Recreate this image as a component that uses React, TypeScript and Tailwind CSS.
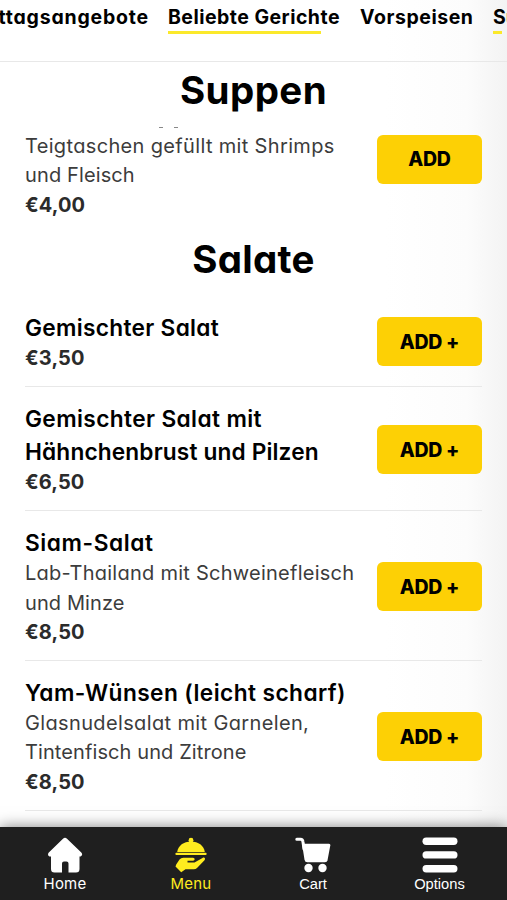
import React from 'react';

interface MenuItem {
  name: string[];
  nameClass: string[];
  description?: string[];
  descriptionClass?: string[];
  price: string;
}

const salads: MenuItem[] = [
  {
    name: ['Gemischter Salat'],
    nameClass: ['tracking-[0.3px]'],
    price: '€3,50',
  },
  {
    name: ['Gemischter Salat mit', 'Hähnchenbrust und Pilzen'],
    nameClass: ['tracking-[0.38px]', 'tracking-[0.14px]'],
    price: '€6,50',
  },
  {
    name: ['Siam-Salat'],
    nameClass: ['tracking-[0.57px]'],
    description: ['Lab-Thailand mit Schweinefleisch', 'und Minze'],
    descriptionClass: ['tracking-[0.25px]', 'tracking-[0.1px]'],
    price: '€8,50',
  },
  {
    name: ['Yam-Wünsen (leicht scharf)'],
    nameClass: ['tracking-[0.42px]'],
    description: ['Glasnudelsalat mit Garnelen,', 'Tintenfisch und Zitrone'],
    descriptionClass: ['tracking-[0.36px]', 'tracking-[0.1px]'],
    price: '€8,50',
  },
];

function Description({ lines, classes }: { lines: string[]; classes: string[] }) {
  return (
    <p className="text-[20px] leading-[29.3px] text-[#3c3c3c] whitespace-nowrap">
      {lines.map((line, i) => (
        <span key={line} className={`block ${classes[i]}`}>{line}</span>
      ))}
    </p>
  );
}

function Price({ value }: { value: string }) {
  return <p className="pt-[0.5px] -mb-[0.5px] text-[20px] leading-[29.3px] font-bold text-[#2b2b2b] tracking-[0.1px]">{value}</p>;
}

function AddButton({ label }: { label: string }) {
  return (
    <button className="w-[105px] h-[49px] pt-[2px] shrink-0 rounded-[6px] bg-[#fdd005] text-[19.5px] font-extrabold text-black tracking-[-0.3px]">
      {label}
    </button>
  );
}

function MenuRow({ item }: { item: MenuItem }) {
  return (
    <div className="flex items-center justify-between border-b-[1.5px] border-[#e8e8e8] pt-[15px] pb-[13px]">
      <div>
        <h3 className="text-[22.7px] leading-[33px] font-semibold text-black whitespace-nowrap">
          {item.name.map((line, i) => (
            <span key={line} className={`block ${item.nameClass[i]}`}>{line}</span>
          ))}
        </h3>
        {item.description && item.descriptionClass && (
          <Description lines={item.description} classes={item.descriptionClass} />
        )}
        <Price value={item.price} />
      </div>
      <AddButton label="ADD +" />
    </div>
  );
}

const HomeIcon = () => (
  <svg viewBox="0 0 36 36" className="w-9 h-9" fill="currentColor">
    <path d="M16 1.7a3 3 0 0 1 4 0L34.3 15.4c1.7 1.7.7 4.2-1.8 4.2V32a3.5 3.5 0 0 1-3.5 3.5H21.5V26.5a2 2 0 0 0-2-2h-2.500a2 2 0 0 0-2 2v9H7.500A3.500 3.500 0 0 1 4 32V19.600h-.4C1.200 19.600.2 17.100 1.800 15.400z" />
  </svg>
);

const ServingIcon = () => (
  <svg viewBox="0 0 36 36" className="w-9 h-9" fill="currentColor">
    <circle cx="18" cy="3.2" r="2.4" />
    <path d="M4.200 14.900C4.900 8.700 10.800 4.500 18 4.500s13.100 4.200 13.800 10.400z" />
    <rect x="2.400" y="15.700" width="31.200" height="2.200" rx="1" />
    <path d="M3.200 27.400 6.500 22.600Q8 20.700 10.300 20.700H20C22.200 20.700 22.200 23.700 20 23.700H14.500V25.600H21.500L29.500 20.900C31.600 19.900 32.800 21.600 31.500 23.300L24 31Q22.700 32.200 20.800 32.200H12.500L8.200 35.300 2.500 29.500z" />
  </svg>
);

const CartIcon = () => (
  <svg viewBox="0 0 36 36" className="w-9 h-9">
    <path d="M1.8 2.2H5.5Q7.7 2.2 8 5L9 12" fill="none" stroke="currentColor" strokeWidth="3" strokeLinecap="round" />
    <path d="M7 6.700H34Q35.600 6.700 35.300 8.400L32.500 23.200Q32.100 25.200 30 25.200H12.300Q10 25.200 9.500 22.700z" fill="currentColor" />
    <circle cx="13.500" cy="31" r="4.200" fill="currentColor" />
    <circle cx="27.500" cy="31" r="4.200" fill="currentColor" />
  </svg>
);

const OptionsIcon = () => (
  <svg viewBox="0 0 36 36" className="w-9 h-9" fill="currentColor">
    <rect x="0.5" y="0.5" width="35" height="7.4" rx="3.7" />
    <rect x="0.5" y="14.2" width="35" height="7.4" rx="3.7" />
    <rect x="0.5" y="28" width="35" height="7.4" rx="3.7" />
  </svg>
);

const navItems = [
  { label: 'Home', icon: <HomeIcon />, className: 'w-[130px] text-[15px] tracking-[0.2px] text-white' },
  { label: 'Menu', icon: <ServingIcon />, className: 'w-[122px] text-[15px] tracking-[0.2px] text-[#ffec1f]' },
  { label: 'Cart', icon: <CartIcon />, className: "w-[122px] text-[14.7px] text-white font-['Liberation_Sans',sans-serif]" },
  { label: 'Options', icon: <OptionsIcon />, className: "w-[131px] text-[14.7px] text-white font-['Liberation_Sans',sans-serif]" },
];

export default function App() {
  return (
    <div className="flex flex-col w-[507px] h-[900px] overflow-hidden bg-white bg-[linear-gradient(to_right,#ffffff_76%,#fcfcfc_92%,#f3f3f3_100%)] font-['Inter',sans-serif] [font-feature-settings:'cv11']">
      {/* Category tabs */}
      <nav className="h-[62px] shrink-0 border-b-[1.5px] border-[#e8e8e8] overflow-hidden">
        <div className="flex gap-5 -ml-[29px] pt-[4px] w-[620px] text-[19.5px] leading-[27px] font-bold text-black whitespace-nowrap">
          <span className="flex justify-end w-[178px] -mr-[1px] tracking-[0.8px]">Mittagsangebote</span>
          <span className="w-[172px] tracking-[0.47px]">
            Beliebte Gerichte
            <span className="block w-[153px] h-[2.5px] bg-[#fbe92a]" />
          </span>
          <span className="w-[113px] tracking-[0.55px]">Vorspeisen</span>
          <span>
            Suppen
            <span className="block w-[9px] h-[2.5px] bg-[#fbe92a]" />
          </span>
        </div>
      </nav>

      <main className="flex-1 px-[25px]">
        {/* Soups */}
        <h2 className="h-[56px] text-center text-[38.5px] leading-[56px] font-bold text-black tracking-[0.4px]">Suppen</h2>
        <div className="flex justify-between h-[102px] overflow-hidden pt-[8px]">
          <div>
            {/* Bottom edge of the scrolled-off dish name */}
            <div className="flex gap-[11px] h-[5.8px] pt-[1px] pl-[134px]">
              <span className="w-[4px] h-[1px] bg-[#888888]" />
              <span className="w-[4px] h-[1px] bg-[#888888]" />
            </div>
            <Description
              lines={['Teigtaschen gefüllt mit Shrimps', 'und Fleisch']}
              classes={['tracking-[0.34px]', 'tracking-[0.12px]']}
            />
            <Price value="€4,00" />
          </div>
          <div className="pt-[8.5px]">
            <AddButton label="ADD" />
          </div>
        </div>

        {/* Salads */}
        <h2 className="h-[75.7px] pt-[11px] text-center text-[38.5px] leading-[56px] font-bold text-black tracking-[0.3px]">Salate</h2>
        {salads.map((item) => (
          <MenuRow key={item.name[0]} item={item} />
        ))}
      </main>

      {/* Bottom navigation */}
      <footer className="relative flex justify-center h-[73.5px] pr-[2px] shrink-0 bg-[#1f1f1f] shadow-[0_0_14px_rgba(0,0,0,0.5)]">
        {navItems.map((item) => (
          <a key={item.label} className={`flex flex-col items-center pt-[10.5px] leading-[22px] ${item.className}`}>
            {item.icon}
            {item.label}
          </a>
        ))}
      </footer>
    </div>
  );
}
